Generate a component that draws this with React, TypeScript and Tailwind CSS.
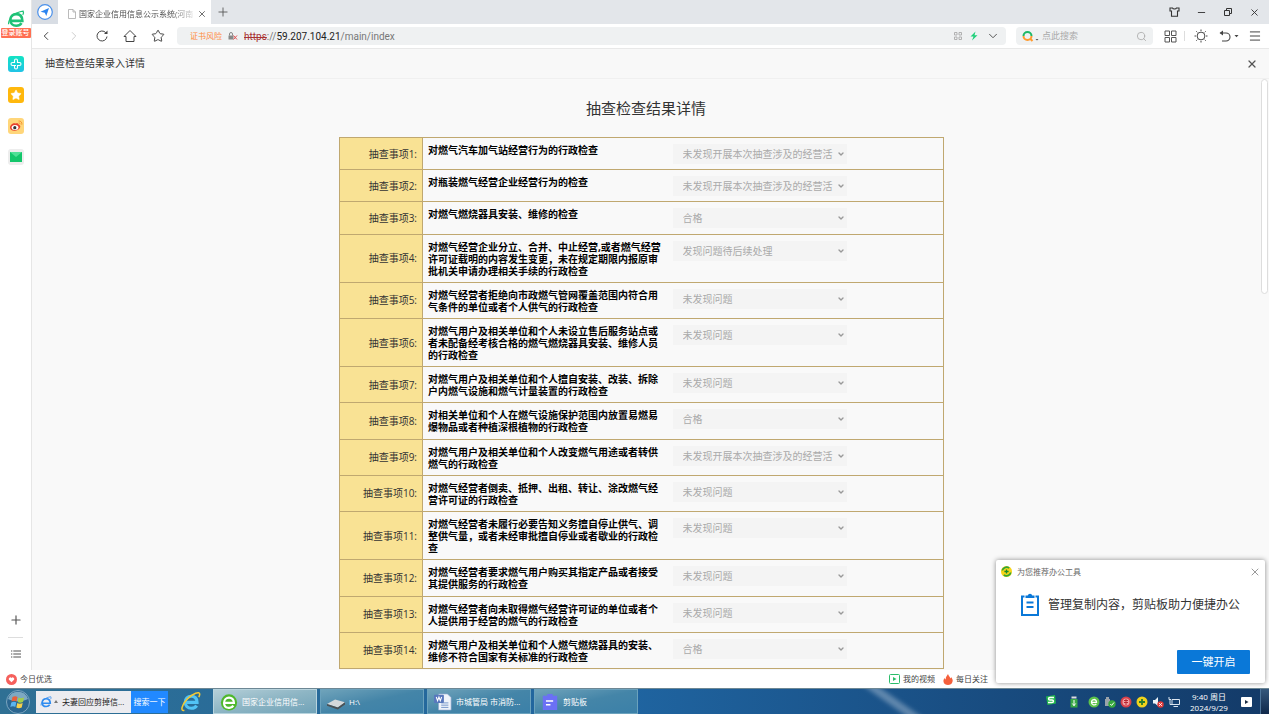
import type { ReactNode } from "react";
import { ChevronDown, ChevronLeft, ChevronRight, Menu, Minus, Plus, Search, Star, X } from "lucide-react";

type CheckItem = {
  title: string;
  result: string;
};

const NOT_CARRIED_OUT = "未发现开展本次抽查涉及的经营活";
const NO_PROBLEM = "未发现问题";
const QUALIFIED = "合格";
const PENDING = "发现问题待后续处理";

const checkItems: CheckItem[] = [
  { title: "对燃气汽车加气站经营行为的行政检查", result: NOT_CARRIED_OUT },
  { title: "对瓶装燃气经营企业经营行为的检查", result: NOT_CARRIED_OUT },
  { title: "对燃气燃烧器具安装、维修的检查", result: QUALIFIED },
  {
    title: "对燃气经营企业分立、合并、中止经营,或者燃气经营许可证载明的内容发生变更\uff0c未在规定期限内报原审批机关申请办理相关手续的行政检查",
    result: PENDING,
  },
  { title: "对燃气经营者拒绝向市政燃气管网覆盖范围内符合用气条件的单位或者个人供气的行政检查", result: NO_PROBLEM },
  {
    title: "对燃气用户及相关单位和个人未设立售后服务站点或者未配备经考核合格的燃气燃烧器具安装、维修人员的行政检查",
    result: NO_PROBLEM,
  },
  { title: "对燃气用户及相关单位和个人擅自安装、改装、拆除户内燃气设施和燃气计量装置的行政检查", result: NO_PROBLEM },
  { title: "对相关单位和个人在燃气设施保护范围内放置易燃易爆物品或者种植深根植物的行政检查", result: QUALIFIED },
  { title: "对燃气用户及相关单位和个人改变燃气用途或者转供燃气的行政检查", result: NOT_CARRIED_OUT },
  { title: "对燃气经营者倒卖、抵押、出租、转让、涂改燃气经营许可证的行政检查", result: NO_PROBLEM },
  {
    title: "对燃气经营者未履行必要告知义务擅自停止供气、调整供气量\uff0c或者未经审批擅自停业或者歇业的行政检查",
    result: NO_PROBLEM,
  },
  { title: "对燃气经营者要求燃气用户购买其指定产品或者接受其提供服务的行政检查", result: NO_PROBLEM },
  { title: "对燃气经营者向未取得燃气经营许可证的单位或者个人提供用于经营的燃气的行政检查", result: NO_PROBLEM },
  { title: "对燃气用户及相关单位和个人燃气燃烧器具的安装、维修不符合国家有关标准的行政检查", result: QUALIFIED },
];

function BrowserLogo({ className, color }: { className: string; color: string }) {
  return (
    <svg viewBox="0 0 24 24" className={className} fill="none">
      <path d="M5 14.5h15.5c0-6-3.500-9-8.200-9-4.600 0-7.800 3.200-7.800 7.800 0 4.700 3.200 7.700 7.900 7.700 3 0 5.500-1.300 7-3.500" stroke={color} strokeWidth="3.400" />
      <path d="M2 19C2 11 10 3 21.500 1.500 22.500 3.500 22 5 21 6.500" stroke={color} strokeWidth="1.600" />
    </svg>
  );
}

function IeLogo({ className }: { className: string }) {
  return (
    <svg viewBox="0 0 24 24" className={className} fill="none">
      <path d="M6 13h13.500c0-4.600-2.600-7-6.700-7-4 0-6.800 2.700-6.800 6.800 0 4.200 2.800 6.900 7 6.900 2.800 0 4.800-1 6-3" stroke="#52c3f5" strokeWidth="3.600" />
      <path d="M5 22c-5 1.500-3-6 3-12.500C14.500 2.800 23-.500 22.500 4c-.100 1-.500 2-1 3" stroke="#f5c832" strokeWidth="1.800" />
    </svg>
  );
}

function ReloadIcon() {
  return (
    <svg viewBox="0 0 14 14" className="size-3.5" fill="none" stroke="#444" strokeWidth="1">
      <path d="M12 7.500A5 5 0 1 1 10.800 3.700" />
      <path d="M12.500 1.500v3.500H9z" fill="#444" stroke="none" />
    </svg>
  );
}

function HomeIcon() {
  return (
    <svg viewBox="0 0 14 14" className="size-3.5" fill="none" stroke="#444" strokeWidth="1">
      <path d="M1 7.500 7 1.500l6 6H11v5H3v-5z" strokeLinejoin="round" />
    </svg>
  );
}

function SideBar() {
  return (
    <aside className="flex w-8 shrink-0 flex-col items-center border-r border-[#e6e6e6] bg-white pt-2.5">
      <button type="button" aria-label="浏览器" className="flex flex-col items-center">
        <BrowserLogo className="size-[18px]" color="#1fc277" />
        <span className="w-[30px] rounded-[1px] bg-[#ff6f52] text-center text-[7px] leading-[10px] font-medium text-white">登录账号</span>
      </button>
      <nav className="mt-[18px] flex flex-col gap-[15px]">
        <button type="button" aria-label="健康" className="flex size-4 items-center justify-center rounded-[3px] bg-linear-to-b from-[#13e3c3] to-[#21c3e6]">
          <svg viewBox="0 0 12 12" className="size-3" fill="none" stroke="#fff" strokeWidth="1.100">
            <path d="M4.500 7.500V9.500a1.500 1.500 0 0 0 3 0v-2H9.500a1.500 1.500 0 0 0 0-3h-2V2.500a1.500 1.500 0 0 0-3 0v2h-2a1.500 1.500 0 0 0 0 3h3.500" />
          </svg>
        </button>
        <button type="button" aria-label="收藏" className="flex size-4 items-center justify-center rounded-[3px] bg-[#ffb80d]">
          <Star className="size-3 fill-white text-white" strokeWidth={1} />
        </button>
        <button type="button" aria-label="微博" className="flex size-4 items-center justify-center rounded-[3px] bg-[#ffd67a]">
          <svg viewBox="0 0 16 16" className="size-4" fill="none">
            <path d="M2 9.500C2 7 5.500 4.500 7.500 5.500c1.500-.700 3.500-.200 3.200 1.300 1.600.500 2 1.700 1.300 3-1.800 3.800-10 4-10-.300z" fill="#e8402d" />
            <ellipse cx="7" cy="9.600" rx="3.400" ry="2.500" fill="#fff" />
            <circle cx="6.800" cy="9.700" r="1.600" fill="#333" />
            <path d="M10.500 3c2.300-.300 3.800 1.500 3.300 3.700M10.700 4.800c1 0 1.500.600 1.300 1.500" stroke="#f5902a" strokeWidth=".9" />
          </svg>
        </button>
        <button type="button" aria-label="邮箱" className="flex size-4 items-center justify-center rounded-[3px] bg-[#ededed]">
          <svg viewBox="0 0 12 10" className="h-2.5 w-3">
            <rect width="12" height="10" fill="#14c66b" />
            <path d="M0 0h12L6 5z" fill="#4fe096" />
          </svg>
        </button>
      </nav>
      <div className="mt-auto mb-2.5 flex flex-col items-center">
        <button type="button" aria-label="添加">
          <Plus className="size-3.5 text-[#555]" strokeWidth={2} />
        </button>
        <hr className="my-2.5 w-[15px] border-[#ddd]" />
        <button type="button" aria-label="列表">
          <svg viewBox="0 0 10 8" className="my-0.5 h-2 w-2.5" fill="none" stroke="#555" strokeWidth="1.100">
            <path d="M0 1h1.300M2.300 1H10M0 4h1.300M2.300 4H10M0 7h1.300M2.300 7H10" />
          </svg>
        </button>
      </div>
    </aside>
  );
}

function TabStrip() {
  return (
    <div className="flex h-6 shrink-0 items-center bg-[#e3e6ea]">
      <button type="button" aria-label="导航" className="flex h-6 w-[26px] items-center justify-center bg-[#d8dde4]">
        <svg viewBox="0 0 16 16" className="size-4">
          <circle cx="8" cy="8" r="7.300" fill="#fff" stroke="#4a90ea" strokeWidth="1.200" />
          <path d="M12 4 9.300 12 7.800 8.800 3.500 7.700z" fill="#2b84f0" />
        </svg>
      </button>
      <div className="flex h-6 w-[153px] items-center bg-white pt-1 pr-1 pl-2.5">
        <svg viewBox="0 0 8 10" className="h-2.5 w-2 shrink-0" fill="none" stroke="#aaa" strokeWidth=".8">
          <path d="M.5.500H5l2.500 2.500v6.500h-7zM5 .5V3h2.500" />
        </svg>
        <span className="ml-[3px] bg-linear-to-r from-[#444] from-80% to-[#ddd] bg-clip-text text-[8px] leading-3 whitespace-nowrap text-transparent">
          国家企业信用信息公示系统(河南
        </span>
        <button type="button" aria-label="关闭标签页" className="ml-auto">
          <X className="size-2.5 text-[#555]" strokeWidth={2} />
        </button>
      </div>
      <button type="button" aria-label="新标签页" className="ml-[5px]">
        <Plus className="size-3.5 text-[#555]" strokeWidth={1.5} />
      </button>
      <div className="mr-[9px] ml-auto flex items-center gap-4 text-[#333]">
        <button type="button" aria-label="皮肤">
          <svg viewBox="0 0 11 10" className="h-2.5 w-[11px]" fill="none" stroke="#333" strokeWidth="1.100">
            <path d="M1 1h2.500c.5 1.300 3.500 1.300 4 0H10v3H8.500v5.300h-6V4H1z" />
          </svg>
        </button>
        <button type="button" aria-label="最小化">
          <Minus className="size-[11px]" strokeWidth={2} />
        </button>
        <button type="button" aria-label="还原">
          <svg viewBox="0 0 10 10" className="size-2.5" fill="none" stroke="#333" strokeWidth="1">
            <path d="M1.500 3.500h5v5h-5zM3.500 3.500v-2h5v5h-2" />
          </svg>
        </button>
        <button type="button" aria-label="关闭">
          <X className="size-[11px]" strokeWidth={2} />
        </button>
      </div>
    </div>
  );
}

function AddressBar() {
  return (
    <div className="flex h-[25px] shrink-0 items-center border-b border-[#e8e8e8] bg-white pr-[7px]">
      <div className="flex items-center gap-3.5 pl-[7px] text-[#444]">
        <button type="button" aria-label="后退">
          <ChevronLeft className="size-3.5" strokeWidth={1.700} />
        </button>
        <button type="button" aria-label="前进">
          <ChevronRight className="size-3.5 text-[#ccc]" strokeWidth={1.700} />
        </button>
        <button type="button" aria-label="刷新">
          <ReloadIcon />
        </button>
        <button type="button" aria-label="主页">
          <HomeIcon />
        </button>
        <button type="button" aria-label="收藏">
          <Star className="size-3.5" strokeWidth={1.700} />
        </button>
      </div>
      <div className="ml-3 flex h-[18px] flex-1 items-center rounded-sm bg-[#eff1f2] pr-1.5 pl-[13px]">
        <span className="text-[8px] text-[#ff8a3c]">证书风险</span>
        <svg viewBox="0 0 10 8" className="mx-1.5 h-2 w-2.5" fill="none">
          <path d="M.5 3.500h5v4h-5z" fill="#888" />
          <path d="M1.500 3.500V2a1.500 1.500 0 0 1 3 0v1.500" stroke="#888" />
          <path d="m5.500 3.500 3.500 4m0-4-3.500 4" stroke="#e05050" />
        </svg>
        <span className="font-['Roboto',sans-serif] text-[10px] text-[#777]">
          <span className="text-[#a83232] line-through">https</span>://<span className="text-[#222]">59.207.104.21</span>/main/index
        </span>
        <div className="ml-auto flex items-center gap-2">
          <svg viewBox="0 0 8 8" className="size-2" fill="none" stroke="#aaa" strokeWidth=".9">
            <path d="M.5.500h2.500v2.500H.5zM5 .5h2.500v2.500H5zM.5 5h2.500v2.500H.5zM5 5h2.500v2.500H5z" />
          </svg>
          <svg viewBox="0 0 8 10" className="h-2.5 w-2">
            <path d="M5.500.500.5 5.500h3L2 9.500 7.500 4.300h-3z" fill="#1fd07a" />
          </svg>
          <ChevronDown className="size-3.5 text-[#555]" strokeWidth={1.700} />
        </div>
      </div>
      <label className="ml-2.5 flex h-[18px] w-[137px] items-center rounded-sm bg-[#eff1f2] px-1.5">
        <svg viewBox="0 0 18 12" className="h-3 w-[18px] shrink-0" fill="none">
          <path d="M1.500 6a4 4 0 0 1 8 0" stroke="#1fb866" strokeWidth="2" />
          <path d="M1.500 6a4 4 0 0 0 8 0M8.500 9l2 2" stroke="#ff9a2e" strokeWidth="2" />
          <path d="M13.500 9h3L15 10.500z" fill="#555" />
        </svg>
        <input aria-label="搜索" placeholder="点此搜索" className="ml-0.5 min-w-0 flex-1 bg-transparent text-[9px] outline-none placeholder:text-[#aaa]" />
        <Search className="size-[11px] text-[#aaa]" strokeWidth={1.800} />
      </label>
      <div className="ml-[11px] flex items-center text-[#444]">
        <button type="button" aria-label="扩展">
          <svg viewBox="0 0 13 13" className="size-[13px]" fill="none" stroke="#555" strokeWidth="1">
            <path d="M1 1h4.500v4.500H1zM7.500 1H12v4.500H7.500zM1 7.500h4.500V12H1zM7.500 7.500H12V12H7.500z" />
          </svg>
        </button>
        <span className="mx-[7px] h-2.5 w-px bg-[#ddd]" />
        <button type="button" aria-label="亮度" className="ml-0.5">
          <svg viewBox="0 0 14 14" className="size-3.5" fill="none" stroke="#444" strokeWidth="1">
            <circle cx="7" cy="7" r="3.900" />
            <path d="M7 .5v1.500M7 12v1.500M.5 7H2M12 7h1.500M2.300 2.300l1 1M10.700 10.700l1 1M2.300 11.700l1-1M10.700 3.300l1-1" />
          </svg>
        </button>
        <button type="button" aria-label="撤销" className="ml-[11px] flex items-center">
          <svg viewBox="0 0 20 12" className="h-3 w-5" fill="none" stroke="#444" strokeWidth="1.100">
            <path d="M1.500 3H7a4 4 0 0 1 0 8H3" />
            <path d="M4 .5.500 3 4 5.500z" fill="#444" stroke="none" />
            <path d="M15.500 5h4l-2 2.300z" fill="#444" stroke="none" />
          </svg>
        </button>
        <button type="button" aria-label="菜单" className="ml-[9px]">
          <Menu className="size-3.5" strokeWidth={1.700} />
        </button>
      </div>
    </div>
  );
}

function ResultTable() {
  return (
    <table className="mr-[9px] h-[532px] w-[605px] table-fixed border-collapse border border-[#c0a870] text-[10px] leading-3">
      <colgroup>
        <col className="w-[83px]" />
        <col className="w-[240px]" />
        <col />
      </colgroup>
      <tbody>
        {checkItems.map((item, index) => (
          <tr key={item.title} className="border-b border-[#c0a870]">
            <th scope="row" className="border-r border-[#c0a870] bg-[#f9e294] pr-[5px] text-right font-normal text-[#333]">
              抽查事项{index + 1}:
            </th>
            <td className="py-[5px] pr-0 pl-[5px] align-top font-bold text-black">
              <label htmlFor={`result-${index + 1}`} className="block pt-px">{item.title}</label>
            </td>
            <td className="pt-1.5 pb-[5px] pl-2.5 align-top">
              <div className="grid w-[174px] items-center bg-[#f4f4f4]">
                <select
                  id={`result-${index + 1}`}
                  disabled
                  className="col-start-1 row-start-1 h-5 w-full appearance-none bg-transparent pr-3 pl-2.5 text-[10px] text-[#aaa] disabled:opacity-100"
                >
                  <option>{item.result}</option>
                </select>
                <ChevronDown className="col-start-1 row-start-1 mr-0.5 size-2 justify-self-end text-[#999]" strokeWidth={4} />
              </div>
            </td>
          </tr>
        ))}
      </tbody>
    </table>
  );
}

function Popup() {
  return (
    <section className="absolute right-1 bottom-[31px] flex w-[269px] flex-col rounded-[2px] bg-white pb-[9px] shadow-[0_0_5px_rgba(0,0,0,0.45)]">
      <header className="flex h-[23px] items-center pr-1 pl-[5px]">
        <svg viewBox="0 0 12 12" className="size-[11px]">
          <circle cx="6" cy="6" r="6" fill="#f7d518" />
          <path d="M.5 5a5.500 5.500 0 0 1 9-3.300L8.500 3A4 4 0 0 0 2.300 5zM11.500 7a5.500 5.500 0 0 1-9 3.300L3.500 9a4 4 0 0 0 6.200-2z" fill="#2fa53a" />
          <path d="M6 3.700v4.600M3.700 6h4.600" stroke="#168a2c" strokeWidth="1.400" />
        </svg>
        <h2 className="ml-[5px] text-[8px] text-[#666]">为您推荐办公工具</h2>
        <button type="button" aria-label="关闭" className="ml-auto">
          <X className="size-3 text-[#777]" strokeWidth={1.500} />
        </button>
      </header>
      <div className="flex items-center gap-2 pt-2.5 pl-6">
        <svg viewBox="0 0 20 24" className="h-6 w-5" fill="none" stroke="#0a78d8" strokeWidth="2">
          <path d="M4.500 3.500H2v18.500h16V3.500h-2.500" />
          <path d="M5.500 2.500h2.200a2.400 2.400 0 0 1 4.600 0h2.200V5h-9z" fill="#0a78d8" stroke="none" />
          <path d="M6.500 9.500h7M6.500 14h7" />
        </svg>
        <p className="text-[12px] leading-6 text-[#333]">{"管理复制内容\uff0c剪贴板助力便捷办公"}</p>
      </div>
      <button type="button" className="mt-[33px] mr-[15px] h-6 w-[73px] self-end rounded-[1px] bg-[#0a78d8] text-[11px] text-white">
        一键开启
      </button>
    </section>
  );
}

function StatusBar() {
  return (
    <div className="flex h-[18px] shrink-0 items-center bg-white text-[8px] text-[#444]">
      <a href="#today" className="flex items-center gap-[3px] pl-1.5">
        <svg viewBox="0 0 12 12" className="size-[11px]">
          <circle cx="6" cy="6" r="6" fill="#f5605c" />
          <path d="M6 9 3.200 6.200A1.700 1.700 0 0 1 6 4.300a1.700 1.700 0 0 1 2.800 1.900z" fill="#fff" />
        </svg>
        今日优选
      </a>
      <div className="mr-[281px] ml-auto flex items-center gap-2">
        <a href="#video" className="flex items-center gap-[3px]">
          <svg viewBox="0 0 11 10" className="h-2.5 w-[11px]">
            <rect x=".5" y=".5" width="10" height="9" rx="1" fill="#fff" stroke="#2bbd6a" />
            <path d="M4 3v4l3.500-2z" fill="#2bbd6a" />
          </svg>
          我的视频
        </a>
        <a href="#daily" className="flex items-center gap-[3px]">
          <svg viewBox="0 0 10 11" className="h-[11px] w-2.5">
            <path d="M5 0c.5 2 2 2.500 2.300 4.300.600-.300.700-.900.700-1.400C9.500 4.500 10 6 9.500 7.800 9 10 7 11 5 11S.8 10 .5 7.800C.2 6 1 5 1.700 4c.2.800.500 1.200 1 1.400C2.500 3 4 2 5 0z" fill="#f5603c" />
          </svg>
          每日关注
        </a>
      </div>
    </div>
  );
}

function TaskButton({ icon, children, active }: { icon: ReactNode; children: ReactNode; active?: boolean }) {
  return (
    <button
      type="button"
      className={`flex h-[25px] w-[104px] items-center gap-1 border pl-1.5 text-[8px] text-white ${
        active
          ? "border-[#b8d4de] bg-linear-to-br from-[#b5cfd8] via-[#8db5c4] to-[#71a3b8]"
          : "border-[#6ba2bd] bg-linear-to-br from-[#6fa3ba] via-[#4485a8] to-[#3b80a8]"
      }`}
    >
      {icon}
      <span className="whitespace-nowrap">{children}</span>
    </button>
  );
}

function Tray() {
  return (
    <div className="ml-auto flex h-full items-center">
      <svg viewBox="0 0 12 12" className="mb-1 size-3">
        <path d="M1 2.500 10 1l1 8.500L2.500 11z" fill="#22b84c" />
        <path d="M9 3.500H5c-2 0-2 2.300 0 2.500h2c2 .200 2 2.500 0 2.500H3" fill="none" stroke="#fff" strokeWidth="1.400" />
      </svg>
      <svg viewBox="0 0 12 12" className="ml-[11px] size-3">
        <path d="M3.500.500h5v2h-5z" fill="#ddd" />
        <path d="M2.500 3h7v8.500h-7z" fill="#39a845" />
        <path d="M6 4v6M4.300 7.500 6 9.500l1.700-2" stroke="#fff" fill="none" />
      </svg>
      <div className="ml-2 flex items-center gap-1">
        <svg viewBox="0 0 12 12" className="size-3">
          <circle cx="6" cy="6" r="5.500" fill="#5cc24a" />
          <path d="M3.500 6.300h5c0-3.800-5-3.600-5 0 0 3 3.500 3.300 4.800 1.500" fill="none" stroke="#fff" strokeWidth="1.300" />
        </svg>
        <svg viewBox="0 0 12 12" className="size-3">
          <path d="M2 1h3v2H2zM1 3h5v7H1z" fill="#9aa3aa" />
          <circle cx="8" cy="8" r="3.700" fill="#37a83e" />
          <path d="m6.300 8 1.300 1.400L10 6.500" fill="none" stroke="#fff" />
        </svg>
        <svg viewBox="0 0 12 12" className="size-3">
          <circle cx="6" cy="6" r="5.500" fill="#d8404a" />
          <circle cx="6" cy="6" r="3.500" fill="#f2a0a4" />
          <path d="M4 4.500h4M4 6.500h4M6 3v6" stroke="#b82632" />
        </svg>
        <svg viewBox="0 0 12 12" className="size-3">
          <circle cx="6" cy="6" r="5.500" fill="#f0d21c" />
          <path d="M6 3v6M3 6h6" stroke="#2a7d2c" strokeWidth="1.800" />
        </svg>
        <svg viewBox="0 0 12 12" className="size-3">
          <path d="M1 4h2l3-3v9L3 7.500H1z" fill="#eef3f8" />
          <circle cx="8.500" cy="8.500" r="3.200" fill="#e23b3b" />
          <path d="m7.200 7.200 2.600 2.600m0-2.600L7.200 9.800" stroke="#fff" />
        </svg>
        <svg viewBox="0 0 12 12" className="size-3" fill="none" stroke="#dce6f0">
          <path d="M4 3.500h7.500v5H4zM5.500 10.500h4.500M1 1v2.500h2M2 3.500v5h2" />
        </svg>
      </div>
      <time className="ml-1.5 w-[46px] text-center text-[8px] leading-[11px] text-white">
        9:40 周日
        <br />
        2024/9/29
      </time>
      <svg viewBox="0 0 11 10" className="mr-2 ml-[9px] h-2.5 w-[11px]">
        <rect width="11" height="10" rx="1" fill="#fff" />
        <path d="M4 3v4l3.500-2z" fill="#1c2d44" />
      </svg>
      <button type="button" aria-label="显示桌面" className="h-full w-[9px] border-l border-[#4d7499] bg-linear-to-b from-[#35587c] to-[#10284a]" />
    </div>
  );
}

function TaskBar() {
  return (
    <footer className="relative flex h-[26px] shrink-0 items-center overflow-hidden border-t border-[#6d8794] bg-linear-to-r from-[#2f7094] via-[#1f64a0] via-50% to-[#133a68]">
      <span className="absolute top-2 left-[852px] h-2 w-20 rotate-[35deg] bg-white/30 blur-[2px]" />
      <button type="button" aria-label="开始" className="ml-1.5">
        <svg viewBox="0 0 24 24" className="size-6">
          <circle cx="12" cy="12" r="11.500" fill="#2b6690" stroke="#8fb4ca" strokeWidth=".8" />
          <path d="M2 9a10.500 10.500 0 0 1 20 0c-6 3-14 3-20 0z" fill="#7da9c2" />
          <path d="M6.500 7c2-1.200 3.500-1 5 0l-1 4.500c-1.600-1-3-1-5 0z" fill="#e8603a" />
          <path d="M12.500 7.500c1.600 1 3.300 1 5.500 0L17 12c-2 1-3.800 1-5.400 0z" fill="#a2cd4a" />
          <path d="M5.300 12.500c2-1 3.400-1 5 0l-1 4.500c-1.600-1-3-1-5 0z" fill="#5cb4ee" />
          <path d="M11.300 13c1.600 1 3.400 1 5.400 0l-1 4.500c-2 1-3.800 1-5.400 0z" fill="#f7d04a" />
        </svg>
      </button>
      <div className="ml-1.5 flex h-[22px] items-center bg-[#ececf0] text-[8px]">
        <div className="flex w-[95px] items-center pl-1">
          <BrowserLogo className="size-3" color="#2f8cf0" />
          <svg viewBox="0 0 4 3" className="ml-0.5 h-[3px] w-1">
            <path d="M2 0 4 3H0z" fill="#777" />
          </svg>
          <span className="ml-1 whitespace-nowrap text-[#222]">夫妻回应剪掉信...</span>
        </div>
        <button type="button" className="h-full w-[37px] bg-[#2189ff] text-white">搜索一下</button>
      </div>
      <button type="button" aria-label="IE" className="ml-3">
        <IeLogo className="size-[21px]" />
      </button>
      <div className="ml-3 flex gap-[3px]">
        <TaskButton
          active
          icon={
            <svg viewBox="0 0 20 20" className="size-[18px]" fill="none">
              <circle cx="10" cy="10.500" r="9" fill="#4fb82c" />
              <path d="M4.500 11h11c0-8-11-7.500-11 0 0 6.500 8 7 10.300 3" stroke="#fff" strokeWidth="2.400" />
            </svg>
          }
        >
          国家企业信用信...
        </TaskButton>
        <TaskButton
          icon={
            <svg viewBox="0 0 20 12" className="mt-1 h-3 w-[18px]">
              <path d="M0 6 9 1l11 3-8 6z" fill="#d5d8da" />
              <path d="m0 6 12 4v2L0 8zM12 10l8-6v2.500L12 12z" fill="#4c5154" />
            </svg>
          }
        >
          H:\
        </TaskButton>
        <TaskButton
          icon={
            <svg viewBox="0 0 20 20" className="size-[18px]">
              <path d="M5 1h10l4 4v14H5z" fill="#eef3fa" stroke="#8ca4cc" strokeWidth=".7" />
              <path d="M8 11h8M8 13.500h8M8 16h8" stroke="#6b8dc4" />
              <rect y="2" width="11" height="9" rx="1" fill="#5878bd" />
              <path d="m2.500 4.500 1.500 4 1.500-4L7 8.500l1.500-4" fill="none" stroke="#fff" strokeWidth="1.200" />
            </svg>
          }
        >
          市城管局 市消防...
        </TaskButton>
        <TaskButton
          icon={
            <svg viewBox="0 0 18 20" className="h-[18px] w-[18px]">
              <path d="M1 3h5V1h6v2h5v16H1z" fill="#6b70f5" />
              <path d="M4.500 9h8M4.500 13h5" stroke="#fff" strokeWidth="1.700" />
            </svg>
          }
        >
          剪贴板
        </TaskButton>
      </div>
      <Tray />
    </footer>
  );
}

export default function App() {
  return (
    <div className="relative flex h-screen flex-col overflow-hidden bg-white font-['Open_Sans','Noto_Sans_CJK_SC',sans-serif]">
      <div className="flex min-h-0 flex-1">
        <SideBar />
        <div className="flex min-w-0 flex-1 flex-col">
          <TabStrip />
          <AddressBar />
          <div className="flex h-[30px] shrink-0 items-center justify-between border-b border-[#f0f0f0] bg-[#f8f8f8] pr-[11px] pl-[13px]">
            <h1 className="text-[10px] text-[#333]">抽查检查结果录入详情</h1>
            <button type="button" aria-label="关闭">
              <X className="size-3 text-[#555]" strokeWidth={2.500} />
            </button>
          </div>
          <div className="flex min-h-0 flex-1 bg-[#f9f9f9]">
            <main className="flex min-w-0 flex-1 flex-col items-center overflow-hidden">
              <h2 className="mt-[19px] mb-[19px] text-[15px] leading-5 text-[#333]">抽查检查结果详情</h2>
              <ResultTable />
            </main>
            <div className="w-[9px] shrink-0 px-px">
              <div className="h-[215px] rounded-sm border border-[#ddd] bg-white" />
            </div>
          </div>
        </div>
      </div>
      <StatusBar />
      <TaskBar />
      <Popup />
    </div>
  );
}
